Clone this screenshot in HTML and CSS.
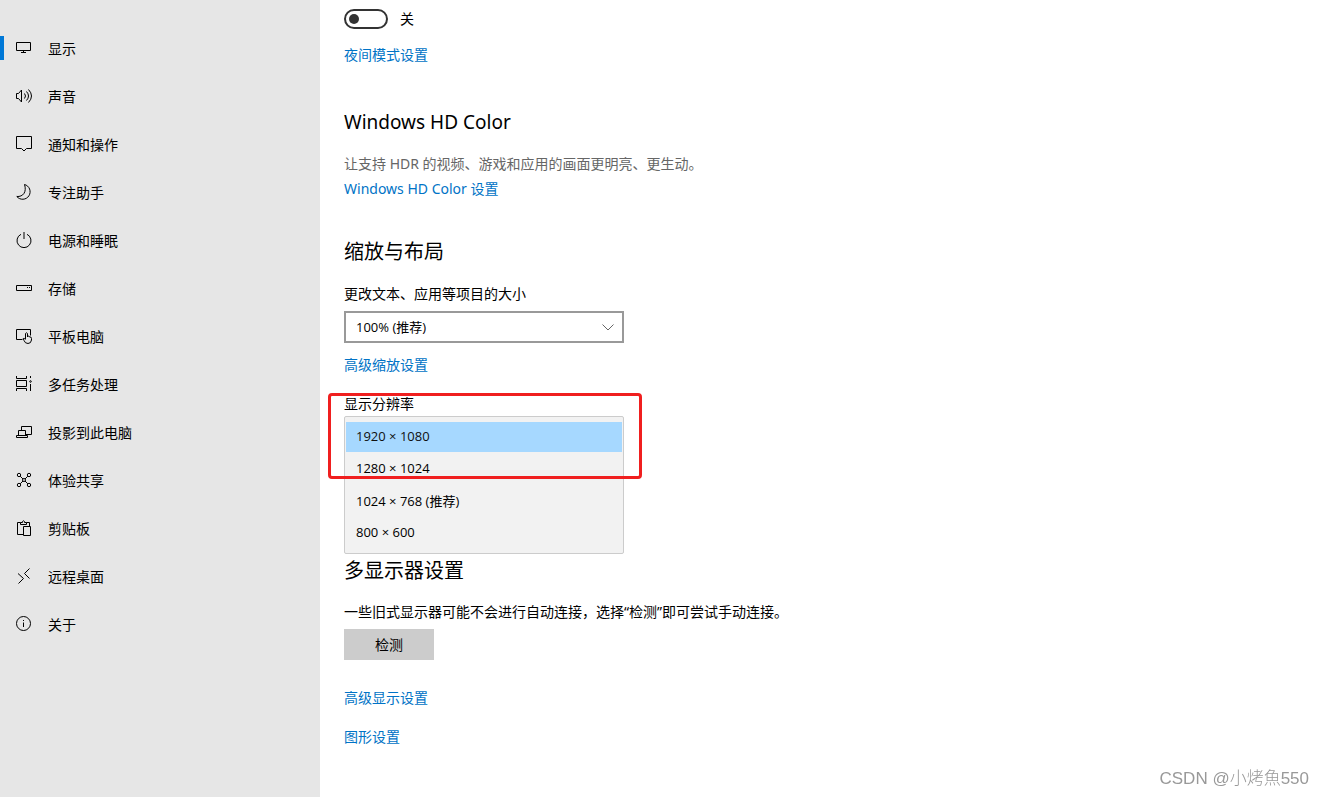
FILE: index.html
```html
<!DOCTYPE html>
<html lang="zh-CN">

<head>
    <meta charset="UTF-8">
    <meta name="viewport" content="width=device-width, initial-scale=1.0">
    <title>显示</title>

    <link rel="stylesheet" href="styles.css">
</head>

<body>
    <nav class="sidebar">
        <ul>
            <li class="active">
                <a href="#display">
                    <svg class="icon" viewBox="0 0 16 16"><path d="M.5 2.5h14v8H.5zM7.5 10.5v2M5 12.5h5"/></svg>
                    显示
                </a>
            </li>
            <li>
                <a href="#sound">
                    <svg class="icon" viewBox="0 0 16 16"><path d="M.5 5.5v5h2l3 3.5V2l-3 3.500zM8.500 5.500q2 2.500 0 5M10.500 3.500q4 4.500 0 9M12.500 1.500q6 6.500 0 13"/></svg>
                    声音
                </a>
            </li>
            <li>
                <a href="#notifications">
                    <svg class="icon" viewBox="0 0 16 16"><path d="M.5.5h15v12h-5l-2.500 2.500-2.500-2.500h-5z"/></svg>
                    通知和操作
                </a>
            </li>
            <li>
                <a href="#focus">
                    <svg class="icon" viewBox="0 0 16 16"><path d="M8.500.5A7.500 7.500 0 1 1 .8 12.500C7 13 11 8 8.500.5z"/></svg>
                    专注助手
                </a>
            </li>
            <li>
                <a href="#power">
                    <svg class="icon" viewBox="0 0 16 16"><path d="M5 2.300a7 7 0 1 0 6 0M8 0v7"/></svg>
                    电源和睡眠
                </a>
            </li>
            <li>
                <a href="#storage">
                    <svg class="icon" viewBox="0 0 16 16"><path d="M.5 5.500h15v5H.5zM11 7.500h1M13 7.500h1"/></svg>
                    存储
                </a>
            </li>
            <li>
                <a href="#tablet">
                    <svg class="icon" viewBox="0 0 16 16"><path d="M6.500 11.500h-6v-10h14v6M9.500 11V5.500q1-1.500 2 0V9M11.500 8q1.500-.5 2 1q2-.5 2 1.500v1.500q-.5 3.500-3.500 3.500t-4-3l-.8-2q.8-.8 2.300 1"/></svg>
                    平板电脑
                </a>
            </li>
            <li>
                <a href="#multitasking">
                    <svg class="icon" viewBox="0 0 16 16"><path d="M.5 0v2.500h10V0M.5 4.500h10v6H.5zM.5 15v-2.500h10V15M14.500 0v2M14.500 8v7"/><circle cx="14.500" cy="5.500" r=".8"/></svg>
                    多任务处理
                </a>
            </li>
            <li>
                <a href="#projecting">
                    <svg class="icon" viewBox="0 0 16 16"><path d="M5.500 6V2.500h10v8H10M2.500 11.500v-5h7v5M.5 13.500v-2h11v2z"/></svg>
                    投影到此电脑
                </a>
            </li>
            <li>
                <a href="#shared">
                    <svg class="icon" viewBox="0 0 16 16"><circle cx="3" cy="3" r="1.700"/><circle cx="13" cy="3" r="1.700"/><circle cx="3" cy="13" r="1.700"/><circle cx="13" cy="13" r="1.700"/><circle cx="8" cy="8" r="1.500"/><path d="M4.200 4.200 7 7M11.800 4.200 9 7M4.200 11.800 7 9M11.800 11.800 9 9"/></svg>
                    体验共享
                </a>
            </li>
            <li>
                <a href="#clipboard">
                    <svg class="icon" viewBox="0 0 16 16"><path d="M7 14.500H1.500v-12h3v2h6v-2h3V6M4.500 2.500h2v-1q1-1.500 2 0v1h2M7.500 6.500h7v9h-7z"/></svg>
                    剪贴板
                </a>
            </li>
            <li>
                <a href="#remote">
                    <svg class="icon" viewBox="0 0 16 16"><path d="M2 5.500 7.500 10.500 2.500 15.500M13.500.5 8.500 5.500 13.500 10.500"/></svg>
                    远程桌面
                </a>
            </li>
            <li>
                <a href="#about">
                    <svg class="icon" viewBox="0 0 16 16"><circle cx="7.500" cy="7.500" r="7"/><path d="M7.500 4v1M7.500 6.500V11"/></svg>
                    关于
                </a>
            </li>
        </ul>
    </nav>

    <main>
        <section>
            <label class="toggle">
                <input type="checkbox">
                关
            </label>
            <a class="link night" href="#night">夜间模式设置</a>
        </section>

        <section class="hd-color">
            <h2>Windows HD Color</h2>
            <p class="hint">让支持 HDR 的视频、游戏和应用的画面更明亮、更生动。</p>
            <a class="link" href="#hd">Windows HD Color 设置</a>
        </section>

        <section class="layout">
            <h2>缩放与布局</h2>

            <div class="field">
                <label for="scale">更改文本、应用等项目的大小</label>
                <div class="dropdown">
                    <select id="scale">
                        <option>100% (推荐)</option>
                    </select>
                    <svg class="chevron" viewBox="0 0 12 7"><path d="M.5.500 6 6 11.500.5"/></svg>
                </div>
                <a class="link" href="#scaling">高级缩放设置</a>
            </div>

            <div class="field resolution">
                <label for="resolution">显示分辨率</label>
                <select id="resolution" size="4">
                    <option selected>1920 × 1080</option>
                    <option>1280 × 1024</option>
                    <option>1024 × 768 (推荐)</option>
                    <option>800 × 600</option>
                </select>
                <div class="marker"></div>
            </div>
        </section>

        <section class="multi">
            <h2>多显示器设置</h2>
            <p>一些旧式显示器可能不会进行自动连接，选择“检测”即可尝试手动连接。</p>
            <button type="button">检测</button>
            <a class="link" href="#advanced">高级显示设置</a>
            <a class="link" href="#graphics">图形设置</a>
        </section>
    </main>

    <div class="watermark">CSDN @小烤魚550</div>
</body>

</html>
```
FILE: styles.css
```css
:root {
    --accent: #0078d7;
    --link: #0073c6;
    --sidebar: #e6e6e6;
}

* {
    margin: 0;
    padding: 0;
    box-sizing: border-box;
}

body {
    display: flex;
    min-height: 100vh;
    background-color: white;
    color: black;
    font-family: "Noto Sans", "Noto Sans CJK SC", sans-serif;
    font-size: 14px;
    line-height: 20px;
}

a {
    color: inherit;
    text-decoration: none;
}

svg {
    fill: none;
    stroke: currentColor;
}

.sidebar {
    flex: 0 0 320px;
    padding-top: 24px;
    background-color: var(--sidebar);
}

.sidebar ul {
    list-style: none;
}

.sidebar li {
    position: relative;
}

.sidebar a {
    display: flex;
    align-items: center;
    gap: 16px;
    height: 48px;
    padding: 2px 16px 0;
}

.sidebar .active::before {
    content: "";
    position: absolute;
    top: 12px;
    left: 0;
    width: 4px;
    height: 24px;
    background-color: var(--accent);
}

.icon {
    width: 16px;
    height: 16px;
    margin-bottom: 2px;
}

main {
    flex: 1;
    padding: 9px 24px;
}

h2 {
    font-size: 20px;
    font-weight: normal;
    line-height: 28px;
    margin-bottom: 18px;
}

.link {
    display: block;
    width: fit-content;
    color: var(--link);
}

.toggle {
    display: flex;
    align-items: center;
    gap: 12px;
    width: fit-content;
}

.toggle input {
    appearance: none;
    display: flex;
    align-items: center;
    width: 44px;
    height: 20px;
    padding: 0 3px;
    border: 2px solid #333;
    border-radius: 10px;
}

.toggle input::before {
    content: "";
    width: 10px;
    height: 10px;
    border-radius: 50%;
    background-color: #333;
}

.toggle input:checked {
    justify-content: flex-end;
}

.night {
    margin-top: 16px;
}

.hd-color {
    margin-top: 43px;
}

.hd-color h2 {
    font-size: 19px;
}

.hint {
    margin-bottom: 5px;
    color: #666;
}

.layout {
    margin-top: 39px;
}

.field {
    max-width: 280px;
}

.field label {
    display: block;
}

select {
    appearance: none;
    display: block;
    width: 100%;
    color: black;
    font-family: "Open Sans", "Noto Sans CJK SC", sans-serif;
    font-size: 13px;
    outline: none;
}

.dropdown {
    position: relative;
    margin: 7px 0 12px;
}

.dropdown select {
    height: 32px;
    padding: 0 10px;
    border: 2px solid #999;
    background-color: white;
}

.chevron {
    position: absolute;
    top: 13px;
    right: 10px;
    width: 12px;
    height: 7px;
    color: #666;
    pointer-events: none;
}

.resolution {
    position: relative;
    margin-top: 19px;
}

.resolution select {
    height: 138px;
    margin-top: 2px;
    padding: 4px 1px;
    border: 1px solid #ccc;
    background-color: #f2f2f2;
    overflow: hidden;
}

.resolution option {
    height: 32px;
    padding: 6px 10px 0;
}

.resolution option:checked {
    background: linear-gradient(#f2f2f2 1px, #a6d8ff 1px 31px, #f2f2f2 31px);
}

/* red frame round the resolution choice */
.marker {
    position: absolute;
    top: -1px;
    left: -16px;
    right: -18px;
    height: 86px;
    border: 3px solid #f01f1f;
    border-radius: 4px;
    pointer-events: none;
}

.multi {
    margin-top: 3px;
}

.multi h2 {
    margin-bottom: 17px;
}

button {
    display: block;
    min-width: 90px;
    height: 31px;
    margin: 7px 0 28px;
    border: none;
    background-color: #ccc;
    color: black;
    font: inherit;
}

.multi .link + .link {
    margin-top: 19px;
}

.watermark {
    position: fixed;
    right: 16px;
    bottom: 8px;
    color: #999;
    font-family: "Liberation Sans", "Noto Sans CJK SC", sans-serif;
    font-size: 17px;
    font-weight: 300;
}
```
